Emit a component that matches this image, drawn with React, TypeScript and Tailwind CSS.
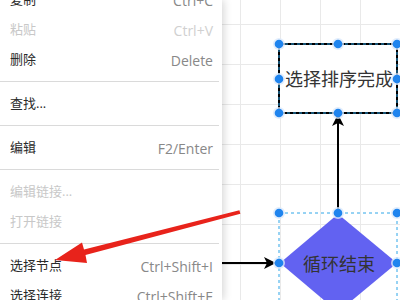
const font = { fontFamily: '"Open Sans", "Noto Sans CJK SC", sans-serif' };

type Item =
  | { kind: "item"; label: string; shortcut?: string; disabled?: boolean }
  | { kind: "sep" };

const items: Item[] = [
  { kind: "item", label: "复制", shortcut: "Ctrl+C" },
  { kind: "item", label: "粘贴", shortcut: "Ctrl+V", disabled: true },
  { kind: "item", label: "删除", shortcut: "Delete" },
  { kind: "sep" },
  { kind: "item", label: "查找..." },
  { kind: "sep" },
  { kind: "item", label: "编辑", shortcut: "F2/Enter" },
  { kind: "sep" },
  { kind: "item", label: "编辑链接...", disabled: true },
  { kind: "item", label: "打开链接", disabled: true },
  { kind: "sep" },
  { kind: "item", label: "选择节点", shortcut: "Ctrl+Shift+I" },
  { kind: "item", label: "选择连接", shortcut: "Ctrl+Shift+E" },
];

function ContextMenu() {
  return (
    <div className="relative z-10 w-[222px] shrink-0 bg-white shadow-[2px_0_8px_rgba(0,0,0,0.16)]">
      <div className="-mt-[15px] flex flex-col">
        {items.map((it, i) =>
          it.kind === "sep" ? (
            <div key={i} className="mt-[6px] mb-[7px] mr-[3px] h-px bg-[#dadada]" />
          ) : (
            <div
              key={i}
              className={`flex h-[30px] items-center justify-between pl-[10px] pr-[9px] text-[13px] ${
                it.disabled ? "text-[#c8c8c8]" : "text-[#2a2a2a]"
              }`}
            >
              <span>{it.label}</span>
              {it.shortcut && (
                <span className={`text-[14px] ${it.disabled ? "text-[#d0d0d0]" : "text-[#888]"}`}>
                  {it.shortcut}
                </span>
              )}
            </div>
          )
        )}
      </div>
    </div>
  );
}

function Handle({ x, y }: { x: number; y: number }) {
  return (
    <g>
      <circle cx={x} cy={y} r={6} fill="#dbe9fb" opacity={0.8} />
      <circle cx={x} cy={y} r={4.3} fill="#1f84ee" />
    </g>
  );
}

function Diagram() {
  return (
    <svg className="pointer-events-none absolute inset-0 z-20" width={400} height={300} viewBox="0 0 400 300">
      {/* diamond */}
      <polygon points="338,214 397,263 338,312 280,263" fill="#6262f1" />
      <text x={339} y={264} fill="#333" fontSize={18} textAnchor="middle" dominantBaseline="central" style={font}>
        循环结束
      </text>
      <rect x={279} y={213} width={118} height={100} fill="none" stroke="#2ea6e8" strokeDasharray="3 3" />

      {/* process box */}
      <rect x={279} y={44} width={118} height={69} fill="#fff" stroke="#000" strokeWidth={2} />
      <rect x={279} y={44} width={118} height={69} fill="none" stroke="#2ea6e8" strokeDasharray="3 3" />
      <text x={339} y={79} fill="#333" fontSize={18} textAnchor="middle" dominantBaseline="central" style={font}>
        选择排序完成
      </text>

      {/* vertical connector */}
      <line x1={338} y1={213} x2={338} y2={122} stroke="#000" strokeWidth={2} />
      <polygon points="338,114 344,126 338,123 332,126" fill="#000" />

      {/* horizontal connector */}
      <line x1={222} y1={263} x2={268} y2={263} stroke="#000" strokeWidth={2} />
      <polygon points="276,263 264,269 267,263 264,257" fill="#000" />

      {[
        [279, 44], [338, 44], [397, 44], [279, 79], [397, 79], [279, 113], [338, 113], [397, 113],
        [279, 213], [338, 213], [397, 213], [279, 263], [397, 263],
      ].map(([x, y], i) => (
        <Handle key={i} x={x} y={y} />
      ))}

      {/* red annotation arrow */}
      <polygon
        points="240.4,213.8 239.4,210.2 84,249.5 82,242.5 55,260 87,263 85.5,255"
        fill="#e8231b"
      />
    </svg>
  );
}

export default function App() {
  return (
    <div className="relative flex h-[300px] w-[400px] overflow-hidden bg-white" style={font}>
      <ContextMenu />
      <div className="flex-1 bg-[linear-gradient(to_right,#e9e9e9_1px,transparent_1px),linear-gradient(to_bottom,#e9e9e9_1px,transparent_1px)] bg-[size:40px_40px] bg-[position:18px_24px]" />
      <Diagram />
    </div>
  );
}
